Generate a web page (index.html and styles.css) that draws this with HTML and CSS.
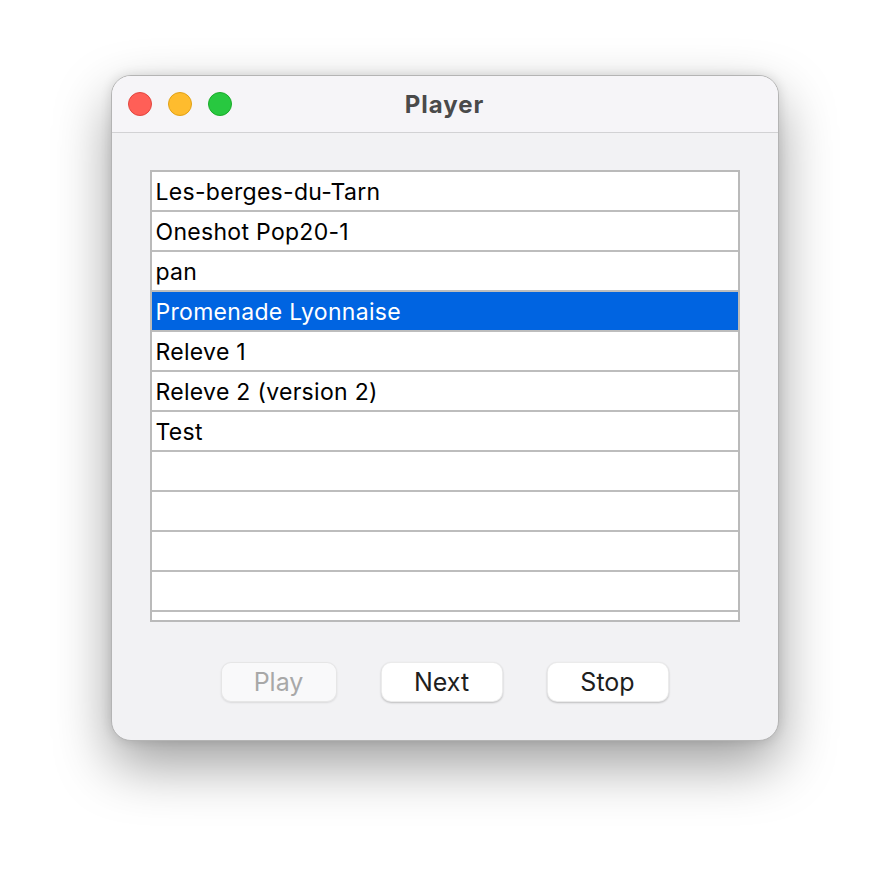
FILE: index.html
```html
<!DOCTYPE html>
<html lang="fr">
<head>
    <meta charset="UTF-8">
    <meta name="viewport" content="width=device-width, initial-scale=1.0">
    <title>Player</title>
    <link rel="stylesheet" href="styles.css">
</head>
<body>
    <div class="window">
        <div class="titlebar">
            <div class="lights">
                <span class="light red"></span>
                <span class="light yellow"></span>
                <span class="light green"></span>
            </div>
            <div class="title">Player</div>
            <div></div>
        </div>
        <div class="content">
            <div class="list">
                <div class="row">Les-berges-du-Tarn</div>
                <div class="row">Oneshot Pop20-1</div>
                <div class="row">pan</div>
                <div class="row selected">Promenade Lyonnaise</div>
                <div class="row">Releve 1</div>
                <div class="row">Releve 2 (version 2)</div>
                <div class="row">Test</div>
                <div class="row"></div>
                <div class="row"></div>
                <div class="row"></div>
                <div class="row"></div>
                <div class="row partial"></div>
            </div>
            <div class="buttons">
                <button class="btn play" disabled>Play</button>
                <button class="btn">Next</button>
                <button class="btn">Stop</button>
            </div>
        </div>
    </div>
</body>
</html>
```

FILE: styles.css
```css
html, body {
    min-height: 100%;
}
body {
    margin: 0;
    min-height: 100vh;
    box-sizing: border-box;
    background-color: #ffffff;
    font-family: Inter, "Liberation Sans", sans-serif;
    display: flex;
    justify-content: center;
    align-items: flex-start;
    padding-top: 75px;
    padding-right: 1px;
}
.window {
    width: 666px;
    border: 1px solid #b4b4b4;
    border-radius: 20px;
    background-color: #f2f2f4;
    overflow: hidden;
    box-shadow: 0 24px 55px rgba(0, 0, 0, 0.38), 0 0 12px rgba(0, 0, 0, 0.12);
}
.titlebar {
    height: 56px;
    background-color: #f6f5f8;
    border-bottom: 1px solid #d2d2d4;
    display: grid;
    grid-template-columns: 1fr auto 1fr;
    align-items: center;
}
.lights {
    display: flex;
    gap: 16px;
    padding-left: 16px;
}
.light {
    width: 22px;
    height: 22px;
    border-radius: 50%;
    border: 1px solid;
}
.red {
    background-color: #ff5f57;
    border-color: #e2463f;
}
.yellow {
    background-color: #febc2e;
    border-color: #e1a116;
}
.green {
    background-color: #28c840;
    border-color: #1aab29;
}
.title {
    font-size: 24px;
    font-weight: 700;
    letter-spacing: 1px;
    color: #4a4a4a;
}
.content {
    padding: 37px 38px 38px 38px;
}
.list {
    border: 2px solid #bababa;
    background-color: #ffffff;
}
.row {
    height: 38px;
    border-bottom: 2px solid #bdbdbd;
    font-size: 23px;
    letter-spacing: 0.3px;
    line-height: 40px;
    padding-left: 4px;
    color: #000000;
}
.row.selected {
    background-color: #0064e1;
    color: #ffffff;
}
.row.partial {
    height: 8px;
    border-bottom: none;
}
.buttons {
    display: flex;
    justify-content: center;
    gap: 44px;
    margin-top: 40px;
}
.btn {
    width: 122px;
    height: 40px;
    border: 1px solid rgba(0, 0, 0, 0.08);
    border-radius: 10px;
    background-color: #ffffff;
    box-shadow: 0 1px 2px rgba(0, 0, 0, 0.22);
    font-family: Inter, "Liberation Sans", sans-serif;
    font-size: 25px;
    color: #1e1e1e;
    padding: 0;
}
.btn.play {
    width: 116px;
    background-color: rgba(255, 255, 255, 0.55);
    color: #a8a8a8;
    box-shadow: 0 1px 2px rgba(0, 0, 0, 0.1);
}
```
